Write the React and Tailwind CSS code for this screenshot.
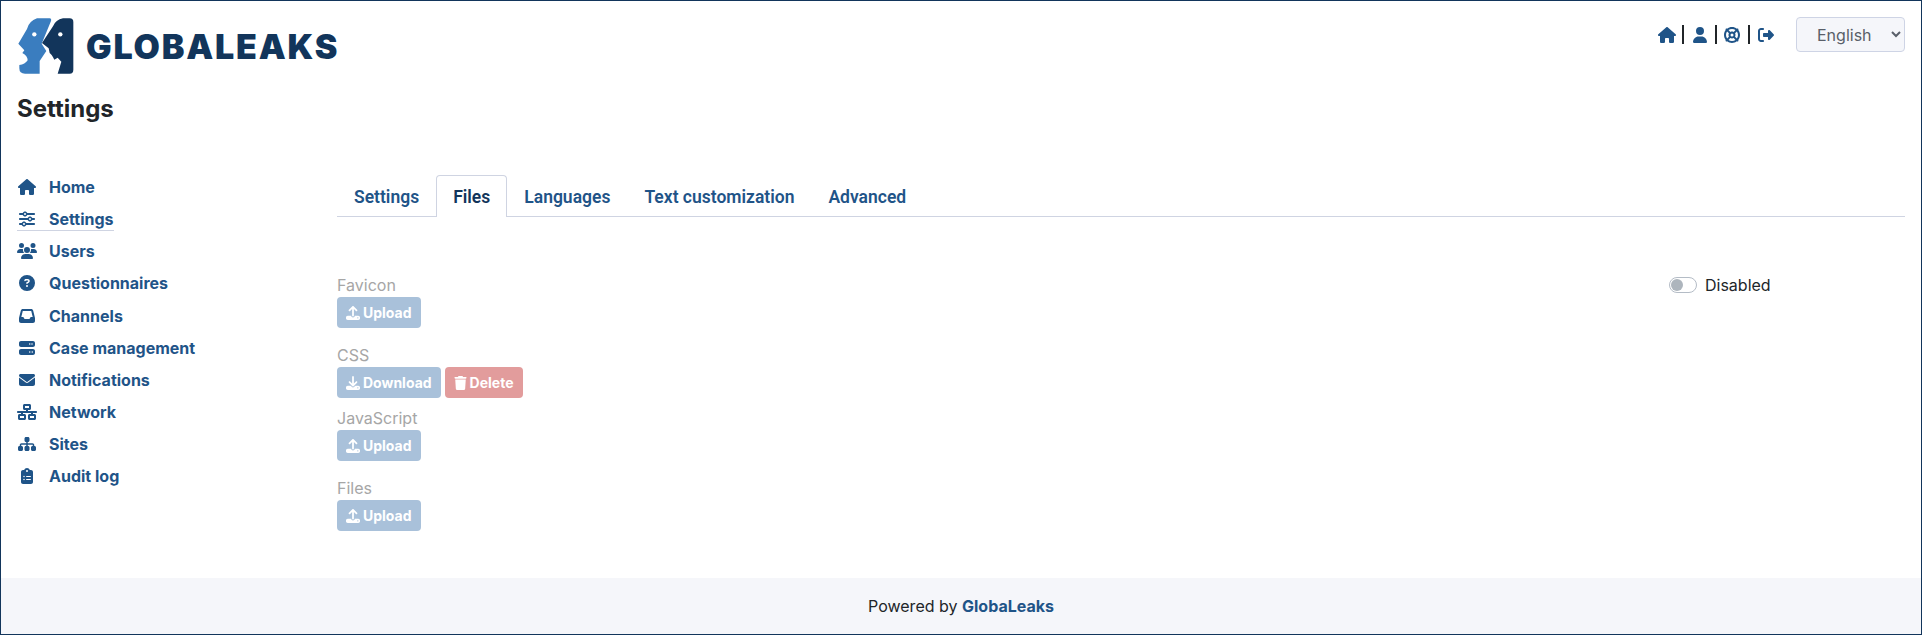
import { FaHouse, FaSliders, FaUsers, FaCircleQuestion, FaInbox, FaServer, FaEnvelope, FaNetworkWired, FaSitemap, FaClipboardList, FaUser, FaLifeRing, FaRightFromBracket, FaUpload, FaDownload, FaTrash } from "react-icons/fa6";

const nav = [
  { label: "Home", icon: FaHouse, size: "h-[16px] w-[18px]" },
  { label: "Settings", icon: FaSliders, size: "h-[16px] w-[16px]", active: true },
  { label: "Users", icon: FaUsers, size: "h-[16px] w-[20px]" },
  { label: "Questionnaires", icon: FaCircleQuestion, size: "h-[16px] w-[16px]" },
  { label: "Channels", icon: FaInbox, size: "h-[16px] w-[16px]" },
  { label: "Case management", icon: FaServer, size: "h-[16px] w-[16px]" },
  { label: "Notifications", icon: FaEnvelope, size: "h-[16px] w-[16px]" },
  { label: "Network", icon: FaNetworkWired, size: "h-[16px] w-[20px]" },
  { label: "Sites", icon: FaSitemap, size: "h-[16px] w-[18px]" },
  { label: "Audit log", icon: FaClipboardList, size: "h-[16px] w-[12px]" },
];

const tabs = ["Settings", "Files", "Languages", "Text customization", "Advanced"];

function Logo() {
  return (
    <svg width="58" height="58" viewBox="48 48 174 174" className="shrink-0">
      <path fill="#3a7dbf" d="M108 52H146Q152 52 150 60L122 128L136 150L116 180V218H72Q55 218 55 202V192Q72 190 80 178Q80 165 64 156L70 148L52 128L78 84Q84 60 108 52Z" />
      <path fill="#12355b" d="M186 52H206Q217 52 217 63V206Q217 218 206 218H170L181 182L170 170L160 176Q152 160 146 156L143 142L123 126L156 76Q164 56 186 52Z" />
      <circle cx="100" cy="100" r="6.5" fill="#fff" />
      <circle cx="178" cy="100" r="6.5" fill="#fff" />
    </svg>
  );
}

function Btn({ icon: Icon, label, red, size }) {
  return (
    <button className={`flex h-[31px] items-center gap-[3px] rounded-[4px] px-[9px] text-[14px] font-bold text-white ${red ? "bg-[#e29c9c]" : "bg-[#a9c1da]"}`}>
      <Icon className={size} />
      {label}
    </button>
  );
}

function FileRow({ label, children, mb }) {
  return (
    <div className={mb}>
      <div className="h-[19px] text-[16px] leading-[21px] text-[#a6a6a6]">{label}</div>
      <div className="mt-[3px] flex gap-[4px]">{children}</div>
    </div>
  );
}

export default function App() {
  return (
    <div className="flex h-[635px] flex-col border border-[#12355b] bg-white font-['Inter',sans-serif] text-[#212529]">
      <div className="flex-1 px-[16px]">
        <header className="flex h-[75px] items-start justify-between pt-[16px]">
          <div className="flex items-center gap-[11px]">
            <Logo />
            <span className="text-[34px] font-black tracking-[1.8px] text-[#12355b]">GLOBALEAKS</span>
          </div>
          <div className="flex items-start">
            <div className="mt-[8px] flex h-[19px] items-center text-[#1f5488]">
              <FaHouse className="h-[16px] w-[18px]" />
              <span className="ml-[6px] h-[19px] w-[2px] bg-[#212529]" />
              <FaUser className="ml-[9px] h-[16px] w-[14px]" />
              <span className="ml-[8px] h-[19px] w-[2px] bg-[#212529]" />
              <FaLifeRing className="ml-[7px] h-[16px] w-[16px]" />
              <span className="ml-[8px] h-[19px] w-[2px] bg-[#212529]" />
              <FaRightFromBracket className="ml-[8px] h-[16px] w-[16px]" />
            </div>
            <select className="ml-[22px] h-[35px] w-[109px] rounded-[4px] border border-[#ced4e5] bg-[#f5f6fa] px-[16px] text-[16px] text-[#595f69]">
              <option>English</option>
            </select>
          </div>
        </header>
        <h1 className="mt-[17px] h-[32px] text-[24px] font-bold leading-[32px] text-[#212529]">Settings</h1>
        <div className="mt-[50px] flex">
          <nav className="w-[320px] shrink-0">
            {nav.map(({ label, icon: Icon, size, active }) => (
              <div key={label} className="flex h-[32.15px] items-start">
                <div className={`flex h-[24px] items-center ${active ? "border-b border-[#cfd4e2]" : ""}`}>
                  <span className="flex w-[20px] justify-center text-[#1f5488]"><Icon className={`${size} shrink-0`} /></span>
                  <span className="ml-[12px] text-[16px] font-bold text-[#1f5488]">{label}</span>
                </div>
              </div>
            ))}
          </nav>
          <main className="flex-1">
            <div className="flex h-[42px] items-stretch border-b border-[#cfd4e2] font-['Roboto',sans-serif] text-[17.5px] font-semibold">
              {tabs.map((t) => (
                <div key={t} className={t === "Files" ? "-mb-px rounded-t-[4px] border border-b-0 border-[#cfd4e2] bg-white px-[16px] pt-[8px] text-[#12355b]" : "px-[17px] pt-[9px] text-[#1f5488]"}>
                  {t}
                </div>
              ))}
            </div>
            <div className="mt-[58px] flex justify-between">
              <div>
                <FileRow label="Favicon" mb="mb-[17px]"><Btn icon={FaUpload} size="h-[14px] w-[14px]" label="Upload" /></FileRow>
                <FileRow label="CSS" mb="mb-[10px]">
                  <Btn icon={FaDownload} size="h-[14px] w-[14px]" label="Download" />
                  <Btn icon={FaTrash} size="h-[14px] w-[13px]" label="Delete" red />
                </FileRow>
                <FileRow label="JavaScript" mb="mb-[17px]"><Btn icon={FaUpload} size="h-[14px] w-[14px]" label="Upload" /></FileRow>
                <FileRow label="Files"><Btn icon={FaUpload} size="h-[14px] w-[14px]" label="Upload" /></FileRow>
              </div>
              <div className="mr-[136px] flex h-[19px] w-[100px] items-center gap-[8px]">
                <span className="flex h-[16px] w-[28px] shrink-0 items-center rounded-full border border-[#b4bcc6] bg-white pl-[1px]">
                  <span className="h-[12px] w-[12px] rounded-full bg-[#adb5bd]" />
                </span>
                <span className="text-[16px] text-[#212529]">Disabled</span>
              </div>
            </div>
          </main>
        </div>
      </div>
      <footer className="flex h-[56px] items-center justify-center bg-[#f5f6fa] text-[16px] text-[#212529]">
        Powered by&nbsp;<span className="font-bold text-[#1f5488]">GlobaLeaks</span>
      </footer>
    </div>
  );
}
